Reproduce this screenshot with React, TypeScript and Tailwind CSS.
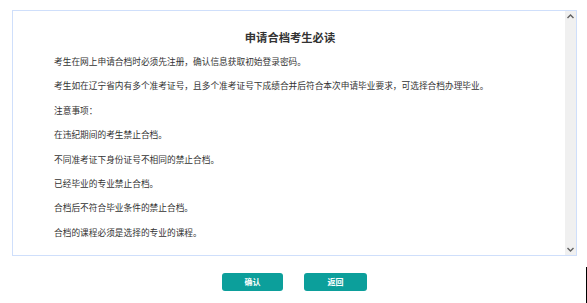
const notices = [
  "考生在网上申请合档时必须先注册，确认信息获取初始登录密码。",
  "考生如在辽宁省内有多个准考证号，且多个准考证号下成绩合并后符合本次申请毕业要求，可选择合档办理毕业。",
  "注意事项：",
  "在违纪期间的考生禁止合档。",
  "不同准考证下身份证号不相同的禁止合档。",
  "已经毕业的专业禁止合档。",
  "合档后不符合毕业条件的禁止合档。",
  "合档的课程必须是选择的专业的课程。",
];

const Arrow = ({ up }: { up?: boolean }) => (
  <svg width="7" height="5" viewBox="0 0 7 5" className="block">
    <path
      d={up ? "M0.5 4 L3.5 1 L6.5 4" : "M0.5 1 L3.5 4 L6.5 1"}
      fill="none"
      stroke="#606060"
      strokeWidth="1.4"
    />
  </svg>
);

export default function App() {
  return (
    <div className="relative w-[587px] h-[303px] bg-white font-['Noto_Sans_CJK_SC',sans-serif] text-[#333]">
      <div className="pt-[10px] px-[12px]">
        <div className="flex h-[246px] w-[565px] border border-[#cfdffb]">
          <div className="flex-1 pt-[18px]">
            <h1 className="text-center text-[11.3px] font-bold leading-[16px] mb-[5px] pl-[2px]">
              申请合档考生必读
            </h1>
            <div className="pl-[41px]">
              {notices.map((line) => (
                <p key={line} className="text-[8.7px] leading-[24.4px] whitespace-nowrap">
                  {line}
                </p>
              ))}
            </div>
          </div>
          <div className="w-[11px] bg-[#f0f0f0] flex flex-col items-center justify-between py-[3px]">
            <Arrow up />
            <Arrow />
          </div>
        </div>
      </div>

      <div className="flex justify-center gap-[21px] mt-[17px] pl-[2px]">
        <button className="w-[61px] h-[18px] rounded-[3px] bg-[#0c9f9b] text-white text-[8px] font-bold leading-none">
          确认
        </button>
        <button className="w-[63px] h-[18px] rounded-[3px] bg-[#0c9f9b] text-white text-[8px] font-bold leading-none">
          返回
        </button>
      </div>

      <div className="absolute left-[586px] top-[267px] w-px h-[36px] bg-black" />
    </div>
  );
}
